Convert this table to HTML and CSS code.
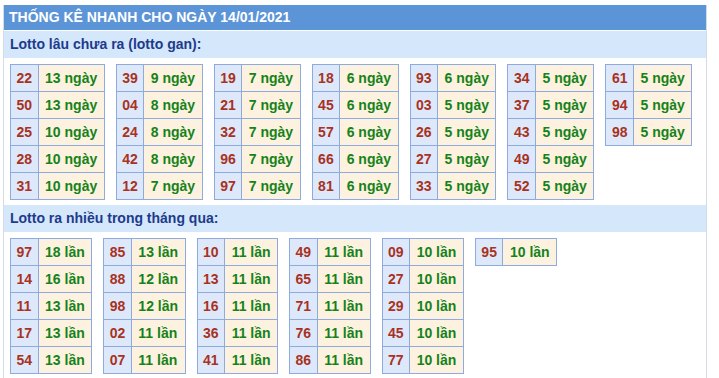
FILE: index.html
```html
<!DOCTYPE html>
<html lang="vi">
<head>
    <meta charset="UTF-8" />
    <title>Thống kê nhanh</title>
    <link rel="stylesheet" href="styles.css">
</head>
<body>

<div class="box">
    <div class="box-title">THỐNG KÊ NHANH CHO NGÀY 14/01/2021</div>

    <div class="sub-title">Lotto lâu chưa ra (lotto gan):</div>
    <div class="tables" id="ganList"></div>

    <div class="sub-title">Lotto ra nhiều trong tháng qua:</div>
    <div class="tables" id="hotList"></div>
</div>

<script>
    // each inner array is one small table: [number, count]
    const gan = [
        [['22', 13], ['50', 13], ['25', 10], ['28', 10], ['31', 10]],
        [['39', 9], ['04', 8], ['24', 8], ['42', 8], ['12', 7]],
        [['19', 7], ['21', 7], ['32', 7], ['96', 7], ['97', 7]],
        [['18', 6], ['45', 6], ['57', 6], ['66', 6], ['81', 6]],
        [['93', 6], ['03', 5], ['26', 5], ['27', 5], ['33', 5]],
        [['34', 5], ['37', 5], ['43', 5], ['49', 5], ['52', 5]],
        [['61', 5], ['94', 5], ['98', 5]]
    ];
    const hot = [
        [['97', 18], ['14', 16], ['11', 13], ['17', 13], ['54', 13]],
        [['85', 13], ['88', 12], ['98', 12], ['02', 11], ['07', 11]],
        [['10', 11], ['13', 11], ['16', 11], ['36', 11], ['41', 11]],
        [['49', 11], ['65', 11], ['71', 11], ['76', 11], ['86', 11]],
        [['09', 10], ['27', 10], ['29', 10], ['45', 10], ['77', 10]],
        [['95', 10]]
    ];

    function fill(target, groups, unit) {
        const box = document.getElementById(target);
        groups.forEach(rows => {
            const table = document.createElement('table');
            table.className = 'lt';
            rows.forEach(([num, count]) => {
                const tr = table.insertRow();
                const a = tr.insertCell();
                a.className = 'num';
                a.textContent = num;
                const b = tr.insertCell();
                b.className = 'cnt';
                b.textContent = count + ' ' + unit;
            });
            box.appendChild(table);
        });
    }

    fill('ganList', gan, 'ngày');
    fill('hotList', hot, 'lần');
</script>

</body>
</html>
```

FILE: styles.css
```css
body {
    margin: 0;
    background: #fff;
    font-family: "Liberation Sans", Arial, sans-serif;
}
.box {
    width: 702px;
    margin: 5px 0 0 3px;
    border-left: 1px solid #d3dbe4;
    border-right: 1px solid #d3dbe4;
}
.box-title {
    height: 25px;
    line-height: 25px;
    padding-left: 5px;
    background: #5c95d7;
    color: #fff;
    font-size: 14px;
    font-weight: bold;
}
.sub-title {
    height: 27px;
    line-height: 27px;
    margin-top: 1px;
    padding-left: 6px;
    background: #d5e7fb;
    color: #1d3b8c;
    font-size: 14px;
    font-weight: bold;
}
.tables {
    display: flex;
    align-items: flex-start;
    gap: 11px;
    padding: 6px 6px 4px;
}
.lt {
    border-collapse: collapse;
    font-size: 14px;
    font-weight: bold;
}
.lt td {
    height: 26px;
    padding: 0 6.5px;
    border: 1px solid #8dabdd;
    white-space: nowrap;
}
.lt .num {
    padding: 0 5.5px;
    background: #dde9fa;
    color: #a8321f;
}
.lt .cnt {
    background: #fdf2df;
    color: #15821a;
}
```
